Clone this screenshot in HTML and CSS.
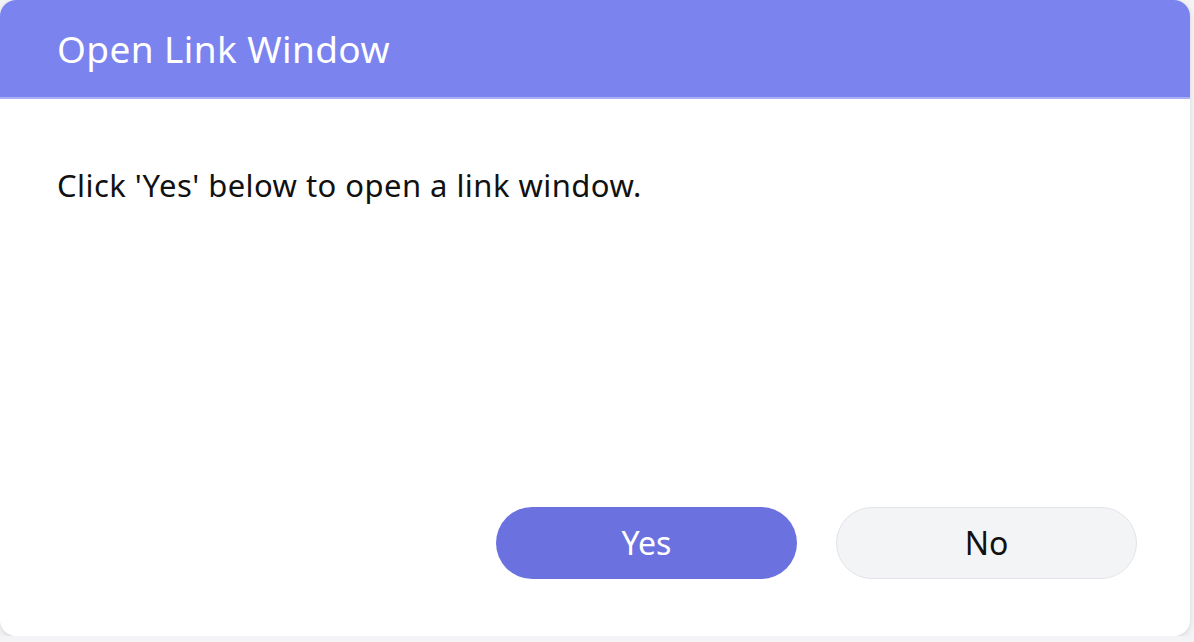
FILE: index.html
```html
<!DOCTYPE html>
<html lang="en">
<head>
    <meta charset="UTF-8">
    <meta name="viewport" content="width=device-width, initial-scale=1.0">
    <title>Open Link Window</title>
    <link rel="stylesheet" href="styles.css">
</head>
<body>
    <div class="dialog">
        <header class="dialog-header">
            <h1>Open Link Window</h1>
        </header>
        <div class="dialog-body">
            <p>Click 'Yes' below to open a link window.</p>
        </div>
        <div class="dialog-actions">
            <button class="btn btn-primary">Yes</button>
            <button class="btn btn-secondary">No</button>
        </div>
    </div>
</body>
</html>
```

FILE: styles.css
```css
body {
    font-family: 'Noto Sans', 'Open Sans', sans-serif;
    margin: 0;
    padding: 0;
    background-color: #f4f4f6;
    color: #111;
}
.dialog {
    width: 1190px;
    height: 636px;
    background-color: #fff;
    border-radius: 16px;
    overflow: hidden;
    box-shadow: 0 2px 6px rgba(0,0,0,0.12);
    display: flex;
    flex-direction: column;
}
.dialog-header {
    background-color: #7b83ef;
    height: 97px;
    border-bottom: 2px solid #aab0f6;
    padding: 0 57px;
    display: flex;
    align-items: center;
}
.dialog-header h1 {
    margin: 0;
    color: #fff;
    font-size: 37px;
    font-weight: 400;
    letter-spacing: 0.4px;
}
.dialog-body {
    flex: 1;
    padding: 0 57px;
}
.dialog-body p {
    margin: 66px 0 0;
    font-size: 31px;
    line-height: 40px;
    letter-spacing: 0.45px;
}
.dialog-actions {
    display: flex;
    justify-content: flex-end;
    gap: 39px;
    padding: 0 53px 57px;
}
.btn {
    width: 301px;
    height: 72px;
    border-radius: 36px;
    font-family: inherit;
    font-size: 32px;
    line-height: 1;
    cursor: pointer;
}
.btn-primary {
    background-color: #6b72e0;
    color: #fff;
    border: none;
}
.btn-secondary {
    background-color: #f3f4f6;
    color: #111;
    border: 1px solid #e2e3e8;
}
```
